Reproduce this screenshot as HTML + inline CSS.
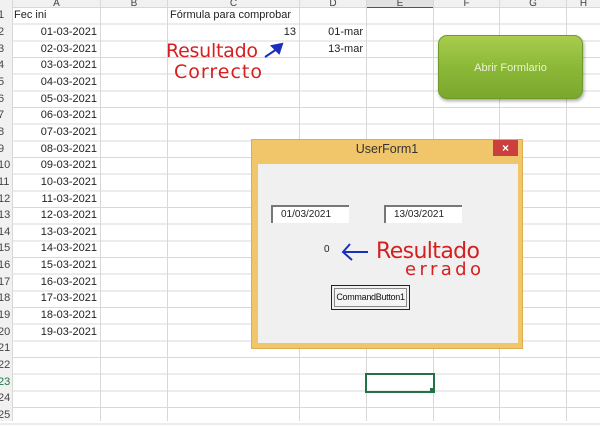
<!DOCTYPE html><html><head><style>
body{margin:0;width:600px;height:421px;overflow:hidden;background:#fff;font-family:"Liberation Sans",sans-serif;position:relative}
.a{position:absolute}
.hl{position:absolute;left:0;width:600px;top:7px;height:420px;background:repeating-linear-gradient(to bottom,#d8d8d8 0,#d8d8d8 1px,transparent 1px,transparent 16.67px)}
.vl{position:absolute;top:0;height:421px;width:1px;background:#d8d8d8}
.col{position:absolute;top:0;height:7px;background:#f1f1f1;font-size:10px;color:#444;text-align:center;line-height:7px;overflow:hidden}
.rn{position:absolute;left:0;width:12px;height:421px;top:0;background:#f1f1f1;border-right:1px solid #c8c8c8}
.rows{position:absolute;top:7.3px;left:0;width:600px}
.r{height:16.67px;position:relative;font-size:11px;line-height:17px;color:#222}
.r .n{position:absolute;left:-2px;width:12px;font-size:11px;color:#444}
.r .d{position:absolute;left:12px;width:85px;text-align:right}
</style></head><body>
<div class="hl"></div>
<div class="rn"></div>
<div class="vl" style="left:12px"></div><div class="vl" style="left:100px"></div><div class="vl" style="left:167px"></div><div class="vl" style="left:299px"></div><div class="vl" style="left:366px"></div><div class="vl" style="left:433px"></div><div class="vl" style="left:499px"></div><div class="vl" style="left:566px"></div>
<div class="col" style="left:13px;width:87px">A</div><div class="col" style="left:101px;width:66px">B</div><div class="col" style="left:168px;width:131px">C</div><div class="col" style="left:300px;width:66px">D</div><div class="col" style="left:367px;width:66px;background:#e2e2e2;border-bottom:1px solid #217346">E</div><div class="col" style="left:434px;width:65px">F</div><div class="col" style="left:500px;width:66px">G</div><div class="col" style="left:567px;width:33px">H</div>
<div class="rows">
<div class="r"><span class="n">1</span><span class="a" style="left:14px">Fec ini</span><span class="a" style="left:170px">Fórmula para comprobar</span></div>
<div class="r"><span class="n">2</span><span class="d">01-03-2021</span><span class="a" style="left:230px;width:66px;text-align:right">13</span><span class="a" style="left:300px;width:63px;text-align:right">01-mar</span></div>
<div class="r"><span class="n">3</span><span class="d">02-03-2021</span><span class="a" style="left:300px;width:63px;text-align:right">13-mar</span></div>
<div class="r"><span class="n">4</span><span class="d">03-03-2021</span></div>
<div class="r"><span class="n">5</span><span class="d">04-03-2021</span></div>
<div class="r"><span class="n">6</span><span class="d">05-03-2021</span></div>
<div class="r"><span class="n">7</span><span class="d">06-03-2021</span></div>
<div class="r"><span class="n">8</span><span class="d">07-03-2021</span></div>
<div class="r"><span class="n">9</span><span class="d">08-03-2021</span></div>
<div class="r"><span class="n">10</span><span class="d">09-03-2021</span></div>
<div class="r"><span class="n">11</span><span class="d">10-03-2021</span></div>
<div class="r"><span class="n">12</span><span class="d">11-03-2021</span></div>
<div class="r"><span class="n">13</span><span class="d">12-03-2021</span></div>
<div class="r"><span class="n">14</span><span class="d">13-03-2021</span></div>
<div class="r"><span class="n">15</span><span class="d">14-03-2021</span></div>
<div class="r"><span class="n">16</span><span class="d">15-03-2021</span></div>
<div class="r"><span class="n">17</span><span class="d">16-03-2021</span></div>
<div class="r"><span class="n">18</span><span class="d">17-03-2021</span></div>
<div class="r"><span class="n">19</span><span class="d">18-03-2021</span></div>
<div class="r"><span class="n">20</span><span class="d">19-03-2021</span></div>
<div class="r"><span class="n">21</span></div>
<div class="r"><span class="n">22</span></div>
<div class="r"><span class="n" style="color:#217346">23</span></div>
<div class="r"><span class="n">24</span></div>
<div class="r"><span class="n">25</span></div>
</div>
<div class="a" style="left:365px;top:373px;width:66px;height:16px;border:2px solid #217346;box-sizing:content-box"></div>
<div class="a" style="left:430px;top:388px;width:5px;height:5px;background:#217346"></div>
<div class="a" style="left:438px;top:35px;width:145px;height:64px;border-radius:9px;background:linear-gradient(#a8cc4e,#8cb838 50%,#7aa82c);border:1px solid #6f9a28;box-shadow:1px 2px 3px rgba(0,0,0,.35);color:#e8f3d0;font-size:11px;text-align:center;line-height:64px;box-sizing:border-box">Abrir Formlario</div>
<svg class="a" style="left:160px;top:35px" width="140" height="60">
<text x="6" y="22" font-family="DejaVu Sans" font-size="19" fill="#d42020" textLength="92">Resultado</text>
<text x="14" y="43" font-family="DejaVu Sans" font-size="19" fill="#d42020" textLength="88">Correcto</text>
<path d="M105 22 L120 12 M112 11 L122 9 L119 18 Z" stroke="#1a2ec0" stroke-width="2" fill="#1a2ec0"/>
</svg>
<div class="a" style="left:251px;top:139px;width:272px;height:210px;background:#f1c56a;border:1px solid #dcae50;box-sizing:border-box"></div>
<div class="a" style="left:251px;top:142px;width:272px;text-align:center;font-size:12.5px;color:#333">UserForm1</div>
<div class="a" style="left:493px;top:140px;width:25px;height:16px;background:#c9403f;color:#fff;font-size:12px;text-align:center;line-height:16px;font-weight:bold">×</div>
<div class="a" style="left:258px;top:164px;width:260px;height:179px;background:#f0f0f0"></div>
<div class="a" style="left:271px;top:205px;width:78px;height:18px;background:#fff;border-top:2px solid #777;border-left:2px solid #777;box-sizing:border-box;font-size:10px;line-height:15px;padding-left:8px;color:#222">01/03/2021</div>
<div class="a" style="left:384px;top:205px;width:78px;height:18px;background:#fff;border-top:2px solid #777;border-left:2px solid #777;box-sizing:border-box;font-size:10px;line-height:15px;padding-left:8px;color:#222">13/03/2021</div>
<div class="a" style="left:324px;top:244px;font-size:10px;color:#222">0</div>
<div class="a" style="left:331px;top:285px;width:79px;height:25px;border:1px solid #222;box-sizing:border-box;padding:2px;background:#f0f0f0"><div style="border:1px solid #888;height:19px;box-sizing:border-box;font-size:9px;letter-spacing:-0.3px;text-align:center;line-height:17px;color:#111;background:#f4f4f4;white-space:nowrap;overflow:hidden">CommandButton1</div></div>
<svg class="a" style="left:340px;top:232px" width="160" height="50">
<path d="M4 20 L28 20 M10 12 L3 20 L12 28" stroke="#1a2ec0" stroke-width="2" fill="none"/>
<text x="36" y="26" font-family="DejaVu Sans" font-size="22" fill="#d42020" textLength="104">Resultado</text>
<text x="65" y="43" font-family="DejaVu Sans" font-size="18" fill="#d42020" textLength="76">errado</text>
</svg>
</body></html>
